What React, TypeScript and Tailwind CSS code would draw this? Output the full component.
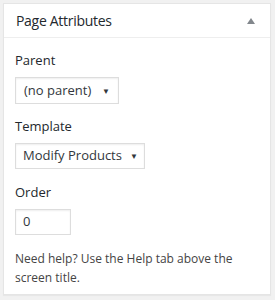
import React from "react";

export default function App() {
  return (
    <div
      className="w-[275px] h-[300px] bg-[#f1f1f1] pt-[3px] pl-[3px]"
      style={{ fontFamily: '"Open Sans", "Noto Sans", sans-serif' }}
    >
      <div className="w-[268px] h-[292px] bg-white border border-[#e5e5e5] shadow-[0_1px_1px_rgba(0,0,0,0.04)] flex flex-col">
        <div className="h-[34px] border-b border-[#eeeeee] flex items-center justify-between pl-[12px] pr-[15px]">
          <span className="text-[14px] tracking-[-0.3px] text-[#23282d]">Page Attributes</span>
          <svg width="8" height="6" viewBox="0 0 8 6">
            <path d="M0 6 L4 0 L8 6 Z" fill="#82878c" />
          </svg>
        </div>
        <div className="flex flex-col px-[11px] pt-[12px] text-[13px] text-[#444]">
          <div className="leading-[20px] text-[#23282d]">Parent</div>
          <div className="mt-[7px] w-[104px] h-[27px] border border-[#ddd] shadow-[inset_0_1px_2px_rgba(0,0,0,0.07)] flex items-center justify-between pl-[8px] pr-[8px] text-[#32373c]">
            <span>(no parent)</span>
            <span className="text-[8px]">▼</span>
          </div>
          <div className="mt-[12px] leading-[20px] text-[#23282d]">Template</div>
          <div className="mt-[7px] w-[130px] h-[26px] border border-[#ddd] shadow-[inset_0_1px_2px_rgba(0,0,0,0.07)] flex items-center justify-between pl-[7px] pr-[6px] text-[#32373c]">
            <span>Modify Products</span>
            <span className="text-[8px]">▼</span>
          </div>
          <div className="mt-[13px] leading-[20px] text-[#23282d]">Order</div>
          <div className="mt-[7px] w-[56px] h-[26px] border border-[#ddd] shadow-[inset_0_1px_2px_rgba(0,0,0,0.07)] flex items-center pl-[7px] text-[#32373c]">
            0
          </div>
          <p className="mt-[14px] leading-[19px] text-[12px] text-[#444]">
            Need help? Use the Help tab above the screen title.
          </p>
        </div>
      </div>
    </div>
  );
}
